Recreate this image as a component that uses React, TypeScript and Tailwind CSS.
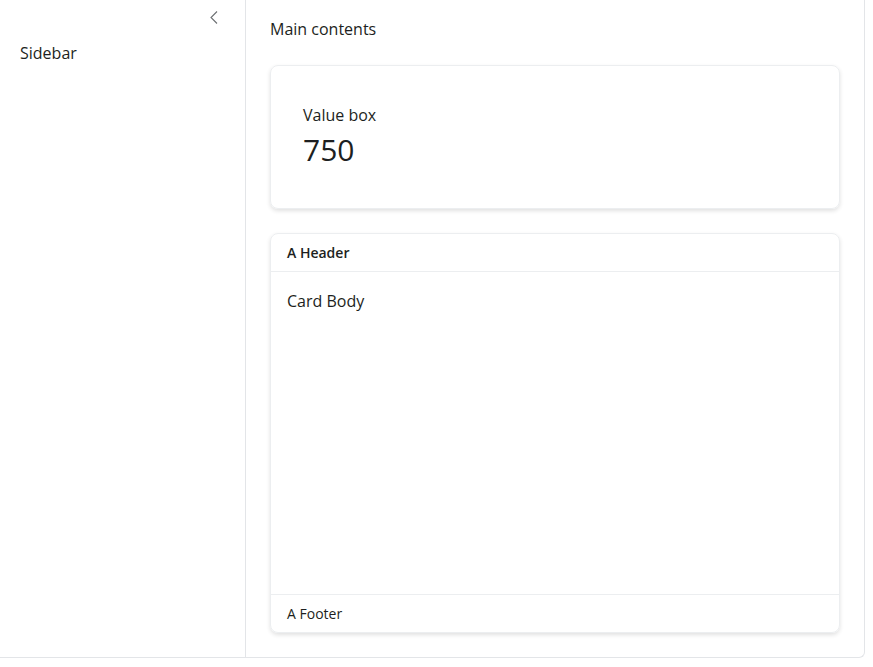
export default function App() {
  return (
    <div className="w-[873px] h-[667px] bg-white text-[#1d1f21]" style={{ fontFamily: '"Open Sans", "Noto Sans", sans-serif' }}>
      <div className="w-[865px] h-[658px] flex border-r border-b border-[#e3e5e8] rounded-br-[6px]">
        {/* Sidebar */}
        <aside className="relative w-[246px] shrink-0 border-r border-[#e3e5e8] pt-[41px] px-[20px]">
          <button className="absolute top-[8px] left-[204px] w-[20px] h-[18px] flex items-center justify-center text-[#6c6f72]">
            <svg width="10" height="15" viewBox="0 0 10 15" fill="none" stroke="currentColor" strokeWidth={1.1}>
              <path d="M8 1.5L2 7.5L8 13.5" />
            </svg>
          </button>
          <p className="text-[16px] leading-[24px]">Sidebar</p>
        </aside>

        {/* Main */}
        <main className="flex-1 flex flex-col px-[24px] pt-[17px] pb-[24px]">
          <p className="text-[16px] leading-[24px] mb-[24px]">Main contents</p>

          <div className="h-[144px] shrink-0 rounded-[8px] border border-[#eceef0] shadow-[0_2px_4px_rgba(0,0,0,0.12)] pl-[32px] pt-[37px]">
            <p className="text-[16px] leading-[24px]">Value box</p>
            <p className="text-[30px] leading-[36px] mt-[5px]">750</p>
          </div>

          <div className="mt-[24px] flex-1 flex flex-col rounded-[8px] border border-[#eceef0] shadow-[0_2px_4px_rgba(0,0,0,0.12)]">
            <div className="h-[38px] shrink-0 flex items-center px-[16px] border-b border-[#eceef0] text-[14px] font-semibold">
              A Header
            </div>
            <div className="flex-1 px-[16px] pt-[17px] text-[16px] leading-[24px]">Card Body</div>
            <div className="h-[38px] shrink-0 flex items-center px-[16px] border-t border-[#eceef0] text-[14px]">
              A Footer
            </div>
          </div>
        </main>
      </div>
    </div>
  );
}
